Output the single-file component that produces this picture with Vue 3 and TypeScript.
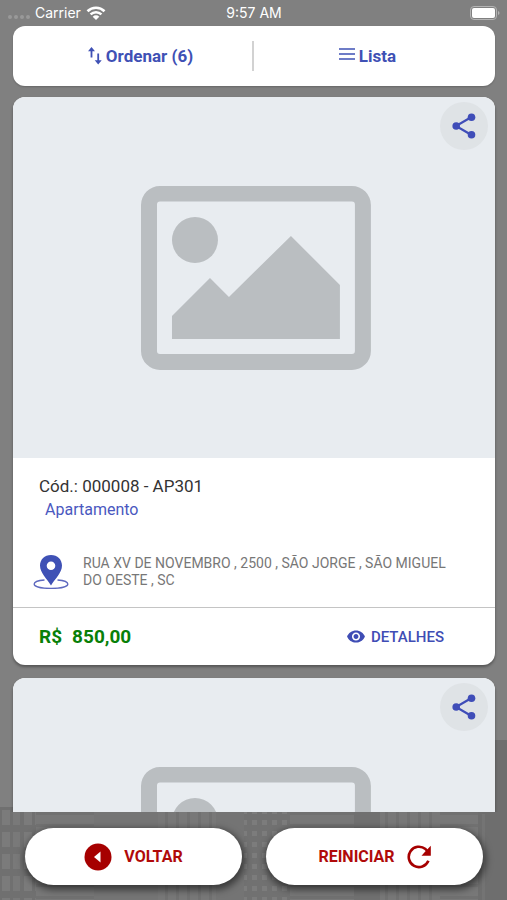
<script setup lang="ts">
interface Listing {
  id: number
  code: string
  kind: string
  address: string
  price: string
}

const listings: Listing[] = [
  {
    id: 1,
    code: '000008 - AP301',
    kind: 'Apartamento',
    address: 'RUA XV DE NOVEMBRO , 2500 , SÃO JORGE , SÃO MIGUEL DO OESTE , SC',
    price: '850,00',
  },
  {
    id: 2,
    code: '000008 - AP301',
    kind: 'Apartamento',
    address: 'RUA XV DE NOVEMBRO , 2500 , SÃO JORGE , SÃO MIGUEL DO OESTE , SC',
    price: '850,00',
  },
]
const total = 6
</script>

<template>
  <div class="screen">
    <svg class="skyline" viewBox="0 0 507 160" preserveAspectRatio="xMidYMax slice" aria-hidden="true">
      <defs>
        <pattern id="wide" width="22" height="22" patternUnits="userSpaceOnUse">
          <rect width="22" height="22" fill="#707070" />
          <rect x="2" y="4" width="8" height="15" fill="#7b7b7b" />
          <rect x="13" y="4" width="7" height="15" fill="#797979" />
        </pattern>
        <pattern id="dots" width="10" height="11" patternUnits="userSpaceOnUse">
          <rect width="10" height="11" fill="#717171" />
          <rect x="2" y="3" width="5" height="5" fill="#7c7c7c" />
        </pattern>
        <pattern id="bands" width="40" height="12" patternUnits="userSpaceOnUse">
          <rect width="40" height="12" fill="#787878" />
          <rect width="40" height="3" fill="#717171" />
        </pattern>
        <pattern id="bars" width="11" height="40" patternUnits="userSpaceOnUse">
          <rect width="11" height="40" fill="#787878" />
          <rect width="3" height="40" fill="#717171" />
        </pattern>
      </defs>
      <rect x="0" y="67" width="36" height="93" fill="url(#wide)" />
      <rect x="36" y="72" width="58" height="88" fill="url(#bands)" />
      <rect x="94" y="72" width="64" height="88" fill="#757575" />
      <rect x="158" y="72" width="58" height="88" fill="url(#bars)" />
      <rect x="216" y="72" width="28" height="88" fill="#747474" />
      <rect x="244" y="72" width="46" height="88" fill="url(#dots)" />
      <rect x="290" y="72" width="64" height="88" fill="url(#bands)" />
      <rect x="354" y="72" width="26" height="88" fill="#707070" />
      <rect x="380" y="72" width="60" height="88" fill="url(#bars)" />
      <rect x="440" y="72" width="38" height="88" fill="url(#bands)" />
      <rect x="478" y="0" width="29" height="160" fill="#6e6e6e" />
      <rect x="482" y="74" width="3" height="86" fill="#747474" />
    </svg>

    <header class="status">
      <div class="carrier">
        <span class="signal"><i></i><i></i><i></i><i></i></span>
        <span>Carrier</span>
        <svg class="wifi" viewBox="0 0 20 15" aria-hidden="true">
          <path d="M1.500 5.200a12.200 12.200 0 0 1 17 0M4.600 8.400a7.800 7.800 0 0 1 10.800 0" fill="none" stroke="#fff" stroke-width="2.600" />
          <path d="M6.700 10.700a4.700 4.700 0 0 1 6.600 0L10 14z" fill="#fff" />
        </svg>
      </div>
      <time>9:57 AM</time>
      <svg class="battery" viewBox="0 0 30 15" aria-hidden="true">
        <rect x="0.500" y="0.500" width="26" height="13" rx="3.500" fill="none" stroke="#b4b4b4" />
        <rect x="2" y="2" width="23" height="10" rx="2" fill="#fff" />
        <path d="M28 5v4q1.500-.5 1.500-2T28 5z" fill="#b4b4b4" />
      </svg>
    </header>

    <nav class="toolbar">
      <button type="button" class="tool sorter">
        <svg class="sort" viewBox="0 0 14 18" aria-hidden="true">
          <path d="M3.500 10.500V2M10.200 6.500v9" fill="none" stroke="currentColor" stroke-width="1.800" />
          <path d="M3.500 0 7 4.200H0zM10.200 17.500l3.500-4.200h-7z" fill="currentColor" />
        </svg>
        <span>Ordenar ({{ total }})</span>
      </button>
      <button type="button" class="tool viewer">
        <svg class="lines" viewBox="0 0 16 14" aria-hidden="true">
          <path d="M0 2h16M0 7h16M0 12h16" stroke="currentColor" stroke-width="1.700" />
        </svg>
        <span>Lista</span>
      </button>
    </nav>

    <main class="list">
      <article v-for="item in listings" :key="item.id" class="card">
        <div class="photo">
          <svg class="placeholder" viewBox="0 0 230 184" aria-hidden="true">
            <path fill-rule="evenodd" d="M19 0H211a19 19 0 0 1 19 19V165a19 19 0 0 1-19 19H19a19 19 0 0 1-19-19V19A19 19 0 0 1 19 0ZM19 15.500a3 3 0 0 0-3 3V165a3 3 0 0 0 3 3H211a3 3 0 0 0 3-3V18.500a3 3 0 0 0-3-3Z" />
            <circle cx="54" cy="54" r="23" />
            <path d="M31 153V130L69 92 88 111 150 50 199 99V153Z" />
          </svg>
          <button type="button" class="share" aria-label="Compartilhar">
            <svg viewBox="0 0 24 26" aria-hidden="true">
              <path d="M19.500 4 4 13l15.500 9" fill="none" stroke="currentColor" stroke-width="2.200" />
              <circle cx="19.500" cy="4.200" r="3.800" />
              <circle cx="4.200" cy="13" r="3.800" />
              <circle cx="19.500" cy="21.800" r="3.800" />
            </svg>
          </button>
        </div>
        <div class="info">
          <h2>Cód.: {{ item.code }}</h2>
          <p class="kind">{{ item.kind }}</p>
          <div class="place">
            <svg class="pin" viewBox="0 0 36 36" aria-hidden="true">
              <path d="M11.500 26C5 26.500 1.200 28 1.200 30c0 2.600 7 4.400 16.800 4.400s16.800-1.800 16.800-4.400c0-2-3.800-3.500-10.300-4" fill="none" stroke="#5e69bf" stroke-width="1.400" />
              <path fill-rule="evenodd" fill="#3f51b5" d="M18 1C11.500 1 7 5.600 7 11.600 7 19 14 25 18 31.500 22 25 29 19 29 11.600 29 5.600 24.500 1 18 1Zm0 6.500a4.300 4.300 0 1 1 0 8.600 4.300 4.300 0 0 1 0-8.600Z" />
            </svg>
            <address>{{ item.address }}</address>
          </div>
        </div>
        <footer class="bottom">
          <strong class="price"><span>R$</span><span>{{ item.price }}</span></strong>
          <button type="button" class="details">
            <svg viewBox="1 4 22 16" aria-hidden="true">
              <path d="M12 4.500C7 4.500 2.700 7.600 1 12c1.700 4.400 6 7.500 11 7.500s9.300-3.100 11-7.500c-1.700-4.400-6-7.500-11-7.500zM12 17c-2.800 0-5-2.200-5-5s2.200-5 5-5 5 2.200 5 5-2.200 5-5 5zm0-8c-1.700 0-3 1.300-3 3s1.300 3 3 3 3-1.300 3-3-1.300-3-3-3z" fill="currentColor" />
            </svg>
            <span>DETALHES</span>
          </button>
        </footer>
      </article>
    </main>

    <footer class="actions">
      <button type="button" class="action">
        <svg class="back" viewBox="0 0 28 28" aria-hidden="true">
          <circle cx="14" cy="14" r="13.500" fill="#a60000" />
          <path d="M16.500 8.500v11L10 14z" fill="#fff" />
        </svg>
        <span>VOLTAR</span>
      </button>
      <button type="button" class="action">
        <span>REINICIAR</span>
        <svg class="restart" viewBox="0 0 24 24" aria-hidden="true">
          <path d="M21.400 15.800A10.200 10.200 0 1 1 18.500 4.100l2 2" fill="none" stroke="#a60000" stroke-width="2.600" />
          <path d="M23.800.8v9.900h-9.300l4-4.500z" fill="#a60000" />
        </svg>
      </button>
    </footer>
  </div>
</template>

<style>
body {
  background: #808080;
}
</style>

<style scoped>
.screen {
  position: relative;
  isolation: isolate;
  display: flex;
  flex-direction: column;
  height: 100vh;
  overflow: hidden;
  background: #808080;
  font-family: Roboto, "Liberation Sans", sans-serif;
}
button {
  border: 0;
  padding: 0;
  background: none;
  font: inherit;
  color: inherit;
  cursor: pointer;
}
svg {
  display: block;
  flex: none;
}
.skyline {
  position: absolute;
  z-index: -1;
  left: 0;
  bottom: 0;
  width: 100%;
  height: 160px;
}
.status {
  display: grid;
  grid-template-columns: 1fr auto 1fr;
  align-items: center;
  height: 26px;
  padding: 0 7px 0 8px;
  color: #fff;
  font-family: Inter, sans-serif;
  font-size: 14px;
  line-height: 16px;
}
.carrier {
  display: flex;
  align-items: center;
  gap: 5px;
}
.signal {
  display: flex;
  gap: 2px;
  padding-top: 8px;
}
.signal i {
  width: 4px;
  height: 4px;
  border-radius: 50%;
  background: #999;
}
.wifi {
  width: 20px;
  height: 15px;
}
.battery {
  width: 30px;
  height: 15px;
  justify-self: end;
}
.toolbar {
  display: grid;
  grid-template-columns: 1fr 1fr;
  align-items: center;
  height: 60px;
  margin: 0 12px 0 13px;
  border-radius: 12px;
  background: #fff;
  box-shadow: 0 1px 2px rgba(0, 0, 0, 0.2);
  color: #3f51b5;
  font-size: 17px;
  font-weight: 700;
  line-height: 20px;
}
.tool {
  display: flex;
  align-items: center;
  justify-content: center;
  gap: 4px;
  height: 30px;
}
.sorter {
  border-right: 2px solid #d2d2d2;
  padding-left: 16px;
}
.viewer {
  padding-right: 14px;
}
.sort {
  width: 14px;
  height: 18px;
}
.lines {
  width: 16px;
  height: 14px;
  margin-bottom: 4px;
}
.list {
  display: flex;
  flex: 1;
  flex-direction: column;
  gap: 13px;
  min-height: 0;
  padding: 11px 12px 0 13px;
  overflow-y: auto;
  scrollbar-width: none;
}
.card {
  flex: none;
  overflow: hidden;
  border-radius: 12px;
  background: #fff;
  box-shadow: 0 2px 3px rgba(0, 0, 0, 0.35);
}
.photo {
  position: relative;
  display: flex;
  align-items: center;
  justify-content: center;
  padding-left: 3px;
  aspect-ratio: 482 / 361;
  box-sizing: border-box;
  background: #e8ecf0;
}
.placeholder {
  width: 48%;
  overflow: visible;
  fill: #babec1;
}
.share {
  position: absolute;
  top: 5px;
  right: 7px;
  display: flex;
  align-items: center;
  justify-content: center;
  width: 48px;
  height: 48px;
  border-radius: 50%;
  background: #dfe3e6;
  color: #3f4db8;
}
.share svg {
  width: 24px;
  height: 26px;
  fill: currentColor;
}
.info {
  padding: 16px 20px 17px;
}
h2 {
  margin: 0 6px;
  color: #333;
  font-size: 17px;
  font-weight: 400;
  line-height: 24px;
}
.kind {
  margin: 0 12px;
  color: #4a58c0;
  font-size: 16px;
  line-height: 24px;
}
.place {
  display: flex;
  align-items: center;
  gap: 14px;
  margin-top: 32px;
}
.pin {
  width: 36px;
  height: 36px;
}
address {
  max-width: 370px;
  color: #777;
  font-size: 14px;
  font-style: normal;
  line-height: 17px;
}
.bottom {
  display: flex;
  align-items: center;
  justify-content: space-between;
  height: 57px;
  padding: 0 51px 0 26px;
  border-top: 1px solid #c4c4c4;
}
.price {
  display: flex;
  gap: 10px;
  color: #088008;
  font-size: 19px;
  line-height: 24px;
}
.details {
  display: flex;
  align-items: center;
  gap: 6px;
  color: #3f4db5;
  font-size: 15px;
  font-weight: 500;
  line-height: 20px;
}
.details svg {
  width: 18px;
  height: 13px;
}
.actions {
  display: flex;
  gap: 24px;
  padding: 16px 24px 15px 25px;
}
.action {
  display: flex;
  flex: 1;
  align-items: center;
  justify-content: center;
  gap: 12px;
  height: 57px;
  border-radius: 29px;
  background: #fff;
  box-shadow: 1px 3px 7px 2px rgba(0, 0, 0, 0.5);
  color: #b00a0a;
  font-size: 16px;
  font-weight: 700;
  line-height: 20px;
}
.back {
  width: 28px;
  height: 28px;
}
.restart {
  width: 24px;
  height: 24px;
}
</style>
